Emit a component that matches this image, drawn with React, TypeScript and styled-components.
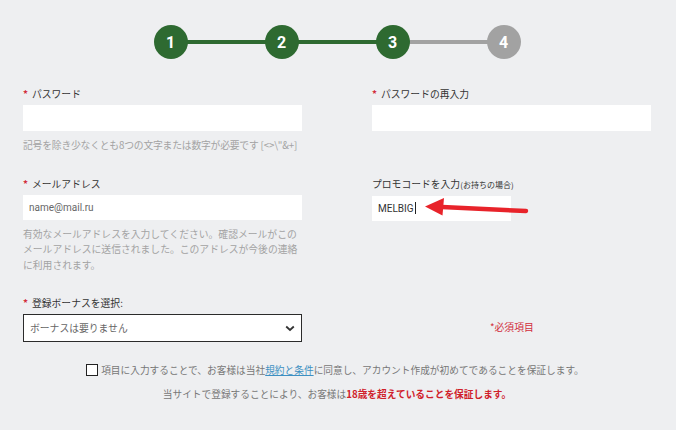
import styled, { createGlobalStyle } from "styled-components";

const GlobalStyle = createGlobalStyle`
  html, body {
    margin: 0;
    padding: 0;
    background: #eeeff1;
  }
  body {
    font-family: "Noto Sans CJK JP", "Noto Sans", Roboto, sans-serif;
    color: #333;
  }
`;

const steps = [
  { n: 1, done: true },
  { n: 2, done: true },
  { n: 3, done: true },
  { n: 4, done: false },
];

const App: React.FC = () => {
  return (
    <Page>
      <GlobalStyle />
      <Stepper>
        {steps.map((s, i) => (
          <StepGroup key={s.n}>
            {i > 0 && <Connector $active={s.done} />}
            <Circle $active={s.done}>{s.n}</Circle>
          </StepGroup>
        ))}
      </Stepper>

      <Row $top={28}>
        <Field>
          <Label>
            <Star>*</Star>パスワード
          </Label>
          <Input $h={26} />
          <Hint $mt={7} $nowrap>
            記号を除き少なくとも8つの文字または数字が必要です [&lt;&gt;\"&amp;+]
          </Hint>
        </Field>
        <Field>
          <Label>
            <Star>*</Star>パスワードの再入力
          </Label>
          <Input $h={26} />
        </Field>
      </Row>

      <Row $top={23}>
        <Field>
          <Label>
            <Star>*</Star>メールアドレス
          </Label>
          <Input $h={25}>
            <Value $color="#666">name@mail.ru</Value>
          </Input>
          <Hint $mt={7}>
            有効なメールアドレスを入力してください。確認メールがこのメールアドレスに送信されました。このアドレスが今後の連絡に利用されます。
          </Hint>
        </Field>
        <Field>
          <Label>
            プロモコードを入力<Small>(お持ちの場合)</Small>
          </Label>
          <PromoWrap>
            <Input $h={25} $w={139}>
              <Value $color="#333">
                MELBIG<Caret />
              </Value>
            </Input>
            <Arrow viewBox="0 0 106 22" width="106" height="22">
              <path d="M102 14 L18 10" stroke="#e8232a" strokeWidth="4.5" strokeLinecap="round" />
              <path d="M1 9.5 L20 1 L18.5 18.5 Z" fill="#e8232a" />
            </Arrow>
          </PromoWrap>
        </Field>
      </Row>

      <Row $top={23}>
        <Field>
          <Label>
            <Star>*</Star>登録ボーナスを選択:
          </Label>
          <Select>
            <span>ボーナスは要りません</span>
            <svg width="10" height="7" viewBox="0 0 10 7">
              <path d="M1.2 1.5 L5 5 L8.8 1.5" fill="none" stroke="#333" strokeWidth="1.8" />
            </svg>
          </Select>
        </Field>
        <RequiredCell>
          <Required>*必須項目</Required>
        </RequiredCell>
      </Row>

      <Agree>
        <Box />
        <span>
          項目に入力することで、お客様は当社<TermsLink>規約と条件</TermsLink>
          に同意し、アカウント作成が初めてであることを保証します。
        </span>
      </Agree>
      <Notice>
        当サイトで登録することにより、お客様は<Strong>18歳を超えていることを保証します。</Strong>
      </Notice>
    </Page>
  );
};

export default App;

const Page = styled.div`
  width: 676px;
  height: 430px;
  box-sizing: border-box;
  padding: 25px 25px 0 23px;
  overflow: hidden;
`;

const Stepper = styled.div`
  display: flex;
  justify-content: center;
  align-items: center;
`;

const StepGroup = styled.div`
  display: flex;
  align-items: center;
`;

const Connector = styled.div<{ $active: boolean }>`
  width: 79px;
  height: 4px;
  background: ${(p) => (p.$active ? "#2e6a31" : "#a2a2a2")};
  margin: 0 -1px;
`;

const Circle = styled.div<{ $active: boolean }>`
  width: 34px;
  height: 34px;
  border-radius: 50%;
  background: ${(p) => (p.$active ? "#2e6a31" : "#a2a2a2")};
  color: #fff;
  font-family: Roboto, "Noto Sans", sans-serif;
  font-weight: 700;
  font-size: 16px;
  display: flex;
  align-items: center;
  justify-content: center;
  position: relative;
  z-index: 1;
`;

const Row = styled.div<{ $top: number }>`
  display: grid;
  grid-template-columns: 279px 279px;
  column-gap: 70px;
  align-items: start;
  margin-top: ${(p) => p.$top}px;
`;

const Field = styled.div`
  display: flex;
  flex-direction: column;
`;

const Label = styled.div`
  font-size: 9.8px;
  line-height: 14px;
  color: #333;
  margin-bottom: 4px;
  white-space: nowrap;
`;

const Star = styled.span`
  color: #d22c3c;
  font-weight: 700;
  margin-right: 4px;
`;

const Small = styled.span`
  font-size: 8px;
`;

const Input = styled.div<{ $h: number; $w?: number }>`
  height: ${(p) => p.$h}px;
  width: ${(p) => (p.$w ? `${p.$w}px` : "100%")};
  background: #fff;
  display: flex;
  align-items: center;
  padding: 0 6px;
  box-sizing: border-box;
`;

const Value = styled.span<{ $color: string }>`
  font-family: Roboto, "Noto Sans", sans-serif;
  font-size: 10px;
  color: ${(p) => p.$color};
  display: flex;
  align-items: center;
`;

const Caret = styled.span`
  display: inline-block;
  width: 1px;
  height: 12px;
  background: #222;
  margin-left: 1px;
`;

const Hint = styled.div<{ $mt: number; $nowrap?: boolean }>`
  margin-top: ${(p) => p.$mt}px;
  font-size: 9.8px;
  line-height: 15.5px;
  color: #a3a3a3;
  white-space: ${(p) => (p.$nowrap ? "nowrap" : "normal")};
  letter-spacing: ${(p) => (p.$nowrap ? "-0.2px" : "0")};
`;

const PromoWrap = styled.div`
  position: relative;
`;

const Arrow = styled.svg`
  position: absolute;
  left: 52px;
  top: 1px;
`;

const Select = styled.div`
  height: 28px;
  box-sizing: border-box;
  border: 1px solid #2b2b2b;
  background: #fff;
  display: flex;
  align-items: center;
  justify-content: space-between;
  padding: 0 6px 0 6px;
  font-size: 9.8px;
  color: #666;
`;

const RequiredCell = styled.div`
  align-self: end;
  padding: 0 0 6px 118px;
`;

const Required = styled.span`
  color: #d22c3c;
  font-size: 9.8px;
  line-height: 14px;
`;

const Agree = styled.div`
  margin-top: 20px;
  display: flex;
  justify-content: center;
  align-items: center;
  gap: 3px;
  font-size: 9.7px;
  line-height: 16px;
  color: #777;
  padding-right: 4px;
`;

const Box = styled.span`
  width: 12px;
  height: 12px;
  box-sizing: border-box;
  border: 1.5px solid #222;
  background: #fff;
  flex: none;
`;

const TermsLink = styled.a`
  color: #3d8fc2;
  text-decoration: underline;
`;

const Notice = styled.div`
  margin-top: 8px;
  text-align: center;
  font-size: 9.7px;
  line-height: 16px;
  color: #777;
`;

const Strong = styled.span`
  color: #d0202a;
  font-weight: 700;
`;
